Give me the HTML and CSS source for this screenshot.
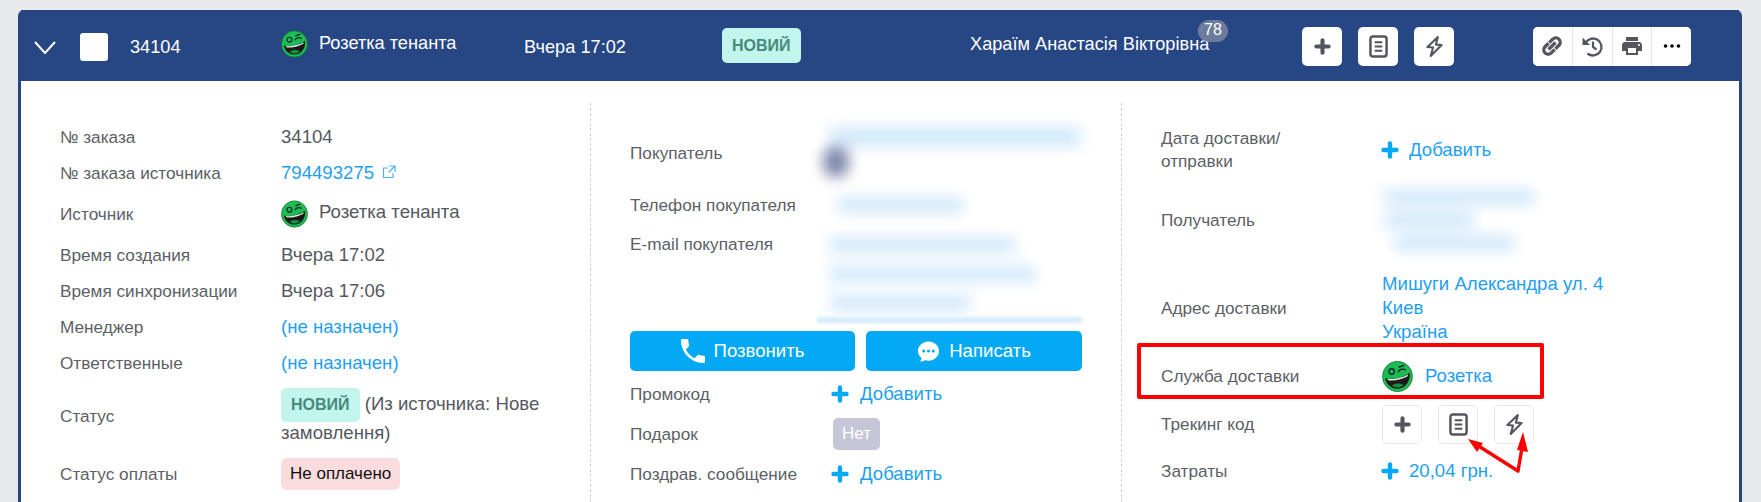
FILE: index.html
```html
<!DOCTYPE html>
<html lang="ru">
<head>
    <meta charset="UTF-8">
    <title>Заказ 34104</title>
    <link rel="stylesheet" href="styles.css">
</head>
<body>
    <svg class="defs" width="0" height="0">
        <symbol id="logo" viewBox="0 0 28 28">
            <ellipse cx="14" cy="14" rx="13.6" ry="13.7" fill="#1bbd52" stroke="#14502c" stroke-width="0.5"/>
            <path d="M2.8 15.5 C9 17 18 15.5 25 10.5 C26 17.5 21.5 24.5 14.5 25 C8.5 25.3 4 21 2.8 15.5 Z" fill="#1a1a1a"/>
            <path d="M5 16 C10 17 18 15.5 23.5 12.3 L23.2 13.8 C18 16.8 10.5 18.2 5.6 17.3 Z" fill="#e8f5ec"/>
            <path d="M9 22 C12 19.8 16 19.8 19.5 21.5 C17 24.6 12 24.8 9 22 Z" fill="#12903f"/>
            <circle cx="8.7" cy="9.5" r="2.5" fill="none" stroke="#123" stroke-width="1.2"/>
            <path d="M14.5 10 C16 7.2 19 6.6 21.5 8.2 M15 5.6 L20 3.8" fill="none" stroke="#123" stroke-width="1.3"/>
        </symbol>
        <symbol id="plus" viewBox="0 0 18 18">
            <path d="M9 2.5 V15.5 M2.5 9 H15.5" fill="none" stroke="currentColor" stroke-width="4.4" stroke-linecap="round"/>
        </symbol>
        <symbol id="doc" viewBox="0 0 20 24">
            <rect x="1.5" y="1.5" width="17" height="21" rx="2.5" fill="none" stroke="currentColor" stroke-width="2.6"/>
            <path d="M6 7.5 H14 M6 12 H14 M6 16.5 H14" stroke="currentColor" stroke-width="2.2"/>
        </symbol>
        <symbol id="bolt" viewBox="0 0 20 24">
            <path d="M13.5 2 L2.5 12.5 L8.5 13 L6 22 L17.5 10.5 L11.5 10 Z" fill="none" stroke="currentColor" stroke-width="2.2" stroke-linejoin="round"/>
        </symbol>
    </svg>

    <div class="card">
        <header class="card-head">
            <div class="cell cell-chevron">
                <svg width="22" height="13" viewBox="0 0 22 13"><path d="M1 1 L11 12 L21 1" fill="none" stroke="#fff" stroke-width="2"/></svg>
            </div>
            <div class="cell cell-check"><span class="checkbox"></span></div>
            <div class="cell cell-id">34104</div>
            <div class="cell cell-source">
                <svg class="logo-small"><use href="#logo"/></svg>
                <span class="source-name">Розетка тенанта</span>
            </div>
            <div class="cell cell-date">Вчера 17:02</div>
            <div class="cell cell-status"><span class="badge-new badge-new-head">НОВИЙ</span></div>
            <div class="cell cell-name">
                <span class="client-name">Хараїм Анастасія Вікторівна</span>
                <span class="count">78</span>
            </div>
            <div class="cell cell-tools">
                <button class="tool tool-white"><svg width="17" height="17" class="ico-gray"><use href="#plus"/></svg></button>
                <button class="tool tool-white"><svg width="19" height="23" class="ico-gray"><use href="#doc"/></svg></button>
                <button class="tool tool-white"><svg width="19" height="23" class="ico-gray"><use href="#bolt"/></svg></button>
            </div>
            <div class="tool-group">
                <button class="tool-item">
                    <svg width="26" height="26" viewBox="0 0 24 24" class="ico-gray"><path transform="rotate(-45 12 12)" fill="currentColor" stroke="currentColor" stroke-width="1.1" d="M3.9 12c0-1.71 1.39-3.1 3.1-3.1h4V7H7c-2.76 0-5 2.24-5 5s2.24 5 5 5h4v-1.9H7c-1.71 0-3.1-1.39-3.1-3.1zM8 13h8v-2H8v2zm9-6h-4v1.9h4c1.71 0 3.1 1.39 3.1 3.1s-1.39 3.1-3.1 3.1h-4V17h4c2.76 0 5-2.24 5-5s-2.24-5-5-5z"/></svg>
                </button>
                <button class="tool-item">
                    <svg width="24" height="24" viewBox="0 0 24 24" class="ico-gray">
                        <path d="M5.5 9 A8.5 8.5 0 1 1 7.5 19.5" fill="none" stroke="currentColor" stroke-width="2.3"/>
                        <path d="M2.5 3.5 V11 H10 Z" fill="currentColor"/>
                        <path d="M13 7.5 V13 L16.5 15.5" fill="none" stroke="currentColor" stroke-width="2.2"/>
                    </svg>
                </button>
                <button class="tool-item">
                    <svg width="24" height="24" viewBox="0 0 24 24" class="ico-gray"><path fill="currentColor" d="M19 8H5c-1.66 0-3 1.34-3 3v6h4v4h12v-4h4v-6c0-1.66-1.34-3-3-3zm-3 11H8v-5h8v5zm3-7c-.55 0-1-.45-1-1s.45-1 1-1 1 .45 1 1-.45 1-1 1zm-1-9H6v4h12V3z"/></svg>
                </button>
                <button class="tool-item">
                    <svg width="18" height="4" viewBox="0 0 18 4"><circle cx="2.5" cy="2" r="1.8"/><circle cx="9" cy="2" r="1.8"/><circle cx="15.5" cy="2" r="1.8"/></svg>
                </button>
            </div>
        </header>

        <div class="card-body">
            <section class="col col-first">
                <div class="row"><span class="label">№ заказа</span><span class="value">34104</span></div>
                <div class="row">
                    <span class="label">№ заказа источника</span>
                    <a class="link value">794493275
                        <svg class="ext" width="14" height="14" viewBox="0 0 14 14"><path d="M11 8 V12.5 H1.5 V3 H6 M7 1 H13 V7 M13 1 L6.5 7.5" fill="none" stroke="currentColor" stroke-width="1.2"/></svg>
                    </a>
                </div>
                <div class="row row-source">
                    <span class="label">Источник</span>
                    <span class="value value-source">
                        <svg class="logo-small"><use href="#logo"/></svg>
                        <span>Розетка тенанта</span>
                    </span>
                </div>
                <div class="row"><span class="label">Время создания</span><span class="value">Вчера 17:02</span></div>
                <div class="row"><span class="label">Время синхронизации</span><span class="value">Вчера 17:06</span></div>
                <div class="row"><span class="label">Менеджер</span><a class="link value">(не назначен)</a></div>
                <div class="row"><span class="label">Ответственные</span><a class="link value">(не назначен)</a></div>
                <div class="row row-status">
                    <span class="label">Статус</span>
                    <span class="value status-text"><span class="badge-new">НОВИЙ</span> (Из источника: Нове замовлення)</span>
                </div>
                <div class="row row-pay"><span class="label">Статус оплаты</span><span class="badge-pay">Не оплачено</span></div>
            </section>

            <section class="col col-second">
                <div class="row row-buyer">
                    <span class="label label-buyer">Покупатель</span>
                    <div class="blur-box blur-buyer">
                        <span class="bar bar-long"></span>
                        <span class="blob"></span>
                    </div>
                </div>
                <div class="row row-phone">
                    <span class="label label-buyer">Телефон покупателя</span>
                    <div class="blur-box"><span class="bar bar-phone"></span></div>
                </div>
                <div class="row row-email">
                    <span class="label label-buyer">E-mail покупателя</span>
                    <div class="blur-box blur-email">
                        <span class="bar bar-mail1"></span>
                        <span class="bar bar-mail2"></span>
                        <span class="bar bar-mail3"></span>
                    </div>
                </div>
                <div class="blur-strip"></div>
                <div class="contact-btns">
                    <button class="btn-blue">
                        <svg width="24" height="24" viewBox="3 3 18 18"><path fill="#fff" d="M6.62 10.79c1.44 2.83 3.76 5.14 6.59 6.59l2.2-2.2c.27-.27.67-.36 1.02-.24 1.12.37 2.33.57 3.57.57.55 0 1 .45 1 1V20c0 .55-.45 1-1 1-9.39 0-17-7.61-17-17 0-.55.45-1 1-1h3.5c.55 0 1 .45 1 1 0 1.25.2 2.45.57 3.57.11.35.03.74-.25 1.02l-2.2 2.2z"/></svg>
                        Позвонить
                    </button>
                    <button class="btn-blue">
                        <svg width="23" height="23" viewBox="0 0 24 24"><path fill="#fff" d="M12 1.5C6 1.5 1 6 1 11.5c0 3 1.4 5.4 3.7 7.2L3.5 23l5.2-1.8c1.1.3 2.2.4 3.3.4 6 0 11-4.6 11-10.1S18 1.5 12 1.5z"/><circle cx="7" cy="11.5" r="1.6" fill="#03a9f4"/><circle cx="12" cy="11.5" r="1.6" fill="#03a9f4"/><circle cx="17" cy="11.5" r="1.6" fill="#03a9f4"/></svg>
                        Написать
                    </button>
                </div>
                <div class="row row-add"><span class="label label-buyer">Промокод</span><a class="link add"><svg width="18" height="18"><use href="#plus"/></svg>Добавить</a></div>
                <div class="row row-add"><span class="label label-buyer">Подарок</span><span class="badge-no">Нет</span></div>
                <div class="row row-add"><span class="label label-buyer">Поздрав. сообщение</span><a class="link add"><svg width="18" height="18"><use href="#plus"/></svg>Добавить</a></div>
            </section>

            <section class="col col-third">
                <div class="row row-date">
                    <span class="label">Дата доставки/<br>отправки</span>
                    <a class="link add"><svg width="18" height="18"><use href="#plus"/></svg>Добавить</a>
                </div>
                <div class="row row-recipient">
                    <span class="label">Получатель</span>
                    <div class="blur-box">
                        <span class="bar bar-rec1"></span>
                        <span class="bar bar-rec2"></span>
                        <span class="bar bar-rec3"></span>
                    </div>
                </div>
                <div class="row row-address">
                    <span class="label">Адрес доставки</span>
                    <a class="link address">Мишуги Александра ул. 4<br>Киев<br>Україна</a>
                </div>
                <div class="row row-service">
                    <span class="label">Служба доставки</span>
                    <a class="link service"><svg class="logo-big"><use href="#logo"/></svg>Розетка</a>
                    <span class="red-box"></span>
                </div>
                <div class="row row-track">
                    <span class="label">Трекинг код</span>
                    <div class="track-btns">
                        <button class="tool tool-line"><svg width="17" height="17" class="ico-gray"><use href="#plus"/></svg></button>
                        <button class="tool tool-line"><svg width="19" height="23" class="ico-gray"><use href="#doc"/></svg></button>
                        <button class="tool tool-line"><svg width="19" height="23" class="ico-gray"><use href="#bolt"/></svg></button>
                    </div>
                    <svg class="arrows" width="66" height="44" viewBox="0 0 66 44">
                        <path d="M10 15 L51 41 L56 12" fill="none" stroke="#f00" stroke-width="3.4" stroke-linejoin="round"/>
                        <path d="M1 9 L16 13 L10 22 Z" fill="#f00"/>
                        <path d="M56 2 L61 22 L50 20 Z" fill="#f00"/>
                    </svg>
                </div>
                <div class="row row-cost">
                    <span class="label">Затраты</span>
                    <a class="link add"><svg width="18" height="18"><use href="#plus"/></svg>20,04 грн.</a>
                </div>
            </section>
        </div>
    </div>
</body>
</html>
```

FILE: styles.css
```css
html, body {
    margin: 0;
    height: 100%;
    overflow: hidden;
}

body {
    background-color: #e7e9ec;
    font-family: "Liberation Sans", Arial, sans-serif;
    font-size: 18.6px;
    color: #55585e;
    padding: 10px 19px 0 18px;
    box-sizing: border-box;
}

.defs {
    position: absolute;
}

button {
    font-family: inherit;
    cursor: pointer;
}

.card {
    height: 100%;
    display: flex;
    flex-direction: column;
    background: #fff;
    border: 3px solid #274684;
    border-bottom: none;
    border-radius: 6px 6px 0 0;
    box-sizing: border-box;
}

/* header */
.card-head {
    display: flex;
    align-items: center;
    height: 68px;
    background: #274684;
    color: #fff;
    font-size: 18.2px;
    flex: none;
    margin-top: -3px;
    padding-top: 3px;
}

.cell {
    display: flex;
    align-items: center;
    flex: none;
}

.cell-chevron {
    width: 46px;
    padding-left: 13px;
}

.cell-check {
    width: 50px;
}

.checkbox {
    width: 28px;
    height: 28px;
    background: #fff;
    border-radius: 3px;
}

.cell-id {
    width: 151px;
}

.cell-source {
    width: 243px;
    gap: 11px;
    margin-top: -6px;
}

.source-name {
    margin-top: -2px;
}

.logo-small {
    width: 27px;
    height: 28px;
    flex: none;
}

.cell-date {
    width: 198px;
}

.cell-status {
    width: 248px;
    margin-top: -3px;
}

.badge-new {
    display: inline-block;
    vertical-align: middle;
    background: #c2f5eb;
    color: #478a7c;
    font-size: 16px;
    font-weight: bold;
    border-radius: 5px;
    padding: 0 10px;
    line-height: 34px;
}

.badge-new-head {
    padding: 0 10px;
    line-height: 35px;
}

.cell-name {
    width: 332px;
    position: relative;
    margin-top: -6px;
}

.count {
    position: absolute;
    left: 228px;
    top: -14px;
    width: 30px;
    height: 22px;
    line-height: 20px;
    font-size: 16px;
    border-radius: 11px;
    background: rgba(118, 130, 158, 0.9);
    text-align: center;
}

.cell-tools {
    width: 231px;
    gap: 16px;
    margin-top: -2px;
}

.tool {
    width: 40px;
    height: 39px;
    border-radius: 5px;
    padding: 0;
    display: flex;
    align-items: center;
    justify-content: center;
    background: #fff;
}

.tool-white {
    border: none;
}

.tool-line {
    border: 1px solid #e6e7eb;
}

.ico-gray {
    color: #54565f;
}

.tool-group {
    display: flex;
    height: 39px;
    width: 158px;
    margin-top: -2px;
    background: #fff;
    border-radius: 5px;
    overflow: hidden;
}

.tool-item {
    flex: 1;
    border: none;
    border-right: 1px solid #e4e6ea;
    background: #fff;
    padding: 0;
    display: flex;
    align-items: center;
    justify-content: center;
}

.tool-item:last-child {
    border-right: none;
}

/* body */
.card-body {
    flex: 1;
    display: grid;
    grid-template-columns: 570px 531px 1fr;
    padding-top: 22px;
    min-height: 0;
}

.col {
    padding: 16px 0 0 39px;
    border-right: 1px dashed #d0d2d6;
    position: relative;
}

.col-third {
    border-right: none;
}

.row {
    display: flex;
    align-items: center;
    min-height: 36px;
    position: relative;
}

.label {
    flex: 0 0 221px;
    font-size: 17.2px;
    line-height: 23px;
    color: #5c5f66;
}

.label-buyer {
    flex-basis: 200px;
}

.value {
    color: #55585e;
}

.link {
    color: #1e9ff2;
    text-decoration: none;
}

.ext {
    margin-left: 3px;
    opacity: 0.8;
}

.row-source {
    min-height: 46px;
}

.value-source {
    display: flex;
    align-items: center;
    gap: 11px;
}

.value-source span {
    margin-top: -5px;
}

.row-status {
    min-height: 70px;
}

.status-text {
    flex: 1;
    line-height: 22px;
}

.row-pay {
    min-height: 46px;
}

.badge-pay {
    background: #fadcde;
    color: #111;
    font-size: 17px;
    border-radius: 6px;
    padding: 0 9px;
    line-height: 32px;
}

/* blurred client data */
.blur-box {
    display: flex;
    flex-direction: column;
    filter: blur(7px);
}

.bar {
    display: block;
    height: 16px;
    background: #d2e9fb;
}

.row-buyer {
    min-height: 68px;
}

.blur-buyer {
    align-self: flex-start;
    padding-top: 8px;
}

.bar-long {
    width: 250px;
    height: 20px;
}

.blob {
    display: block;
    width: 26px;
    height: 30px;
    margin: 0 0 0 -7px;
    border-radius: 40%;
    background: #7f88aa;
}

.bar-phone {
    width: 125px;
    height: 16px;
    margin-left: 8px;
}

.row-email {
    align-items: flex-start;
    min-height: 95px;
    padding-top: 10px;
    box-sizing: border-box;
}

.blur-email {
    gap: 13px;
    padding-top: 4px;
}

.bar-mail1 {
    width: 185px;
}

.bar-mail2 {
    width: 205px;
}

.bar-mail3 {
    width: 140px;
}

.blur-strip {
    margin-left: 187px;
    width: 265px;
    height: 6px;
    margin-top: -1px;
    margin-bottom: -1px;
    background: #d6ecfc;
    filter: blur(1.5px);
}

.contact-btns {
    display: flex;
    gap: 11px;
    margin: 9px 0 3px;
    width: 452px;
}

.btn-blue {
    height: 40px;
    flex: 1 1 0;
    background: #03a9f4;
    border: none;
    border-radius: 5px;
    color: #fff;
    font-size: 18.6px;
    display: flex;
    align-items: center;
    justify-content: center;
    gap: 9px;
}

.btn-blue:first-child {
    flex-basis: 225px;
    flex-grow: 0;
}

.row-add {
    min-height: 40px;
}

.add {
    display: flex;
    align-items: center;
    gap: 11px;
}

.col-second .add {
    margin-left: 1px;
}

.col-third .add {
    margin-left: -1px;
    gap: 10px;
}

.add svg {
    color: #03a9f4;
    flex: none;
}

.badge-no {
    margin-left: 3px;
    background: #c5c6d8;
    color: #fff;
    font-size: 17px;
    border-radius: 5px;
    padding: 0 9px;
    line-height: 32px;
}

/* third column */
.row-date {
    min-height: 61px;
}

.row-recipient {
    min-height: 80px;
    margin-bottom: 12px;
}

.bar-rec1 {
    width: 150px;
    margin: 0 0 7px 2px;
}

.bar-rec2 {
    width: 90px;
    margin: 0 0 7px 2px;
}

.bar-rec3 {
    width: 120px;
    margin-left: 12px;
}

.row-address {
    min-height: 72px;
}

.address {
    line-height: 24px;
}

.row-service {
    min-height: 54px;
    margin-top: 5px;
}

.service {
    display: flex;
    align-items: center;
    gap: 12px;
}

.logo-big {
    width: 31px;
    height: 31px;
    flex: none;
}

.red-box {
    position: absolute;
    left: -24px;
    top: -6px;
    width: 407px;
    height: 56px;
    border: 4px solid #f00;
    border-radius: 2px;
    box-sizing: border-box;
}

.row-track {
    min-height: 40px;
    margin-top: 1px;
}

.track-btns {
    display: flex;
    gap: 16px;
}

.arrows {
    position: absolute;
    left: 306px;
    top: 26px;
}

.row-cost {
    min-height: 54px;
}
```
